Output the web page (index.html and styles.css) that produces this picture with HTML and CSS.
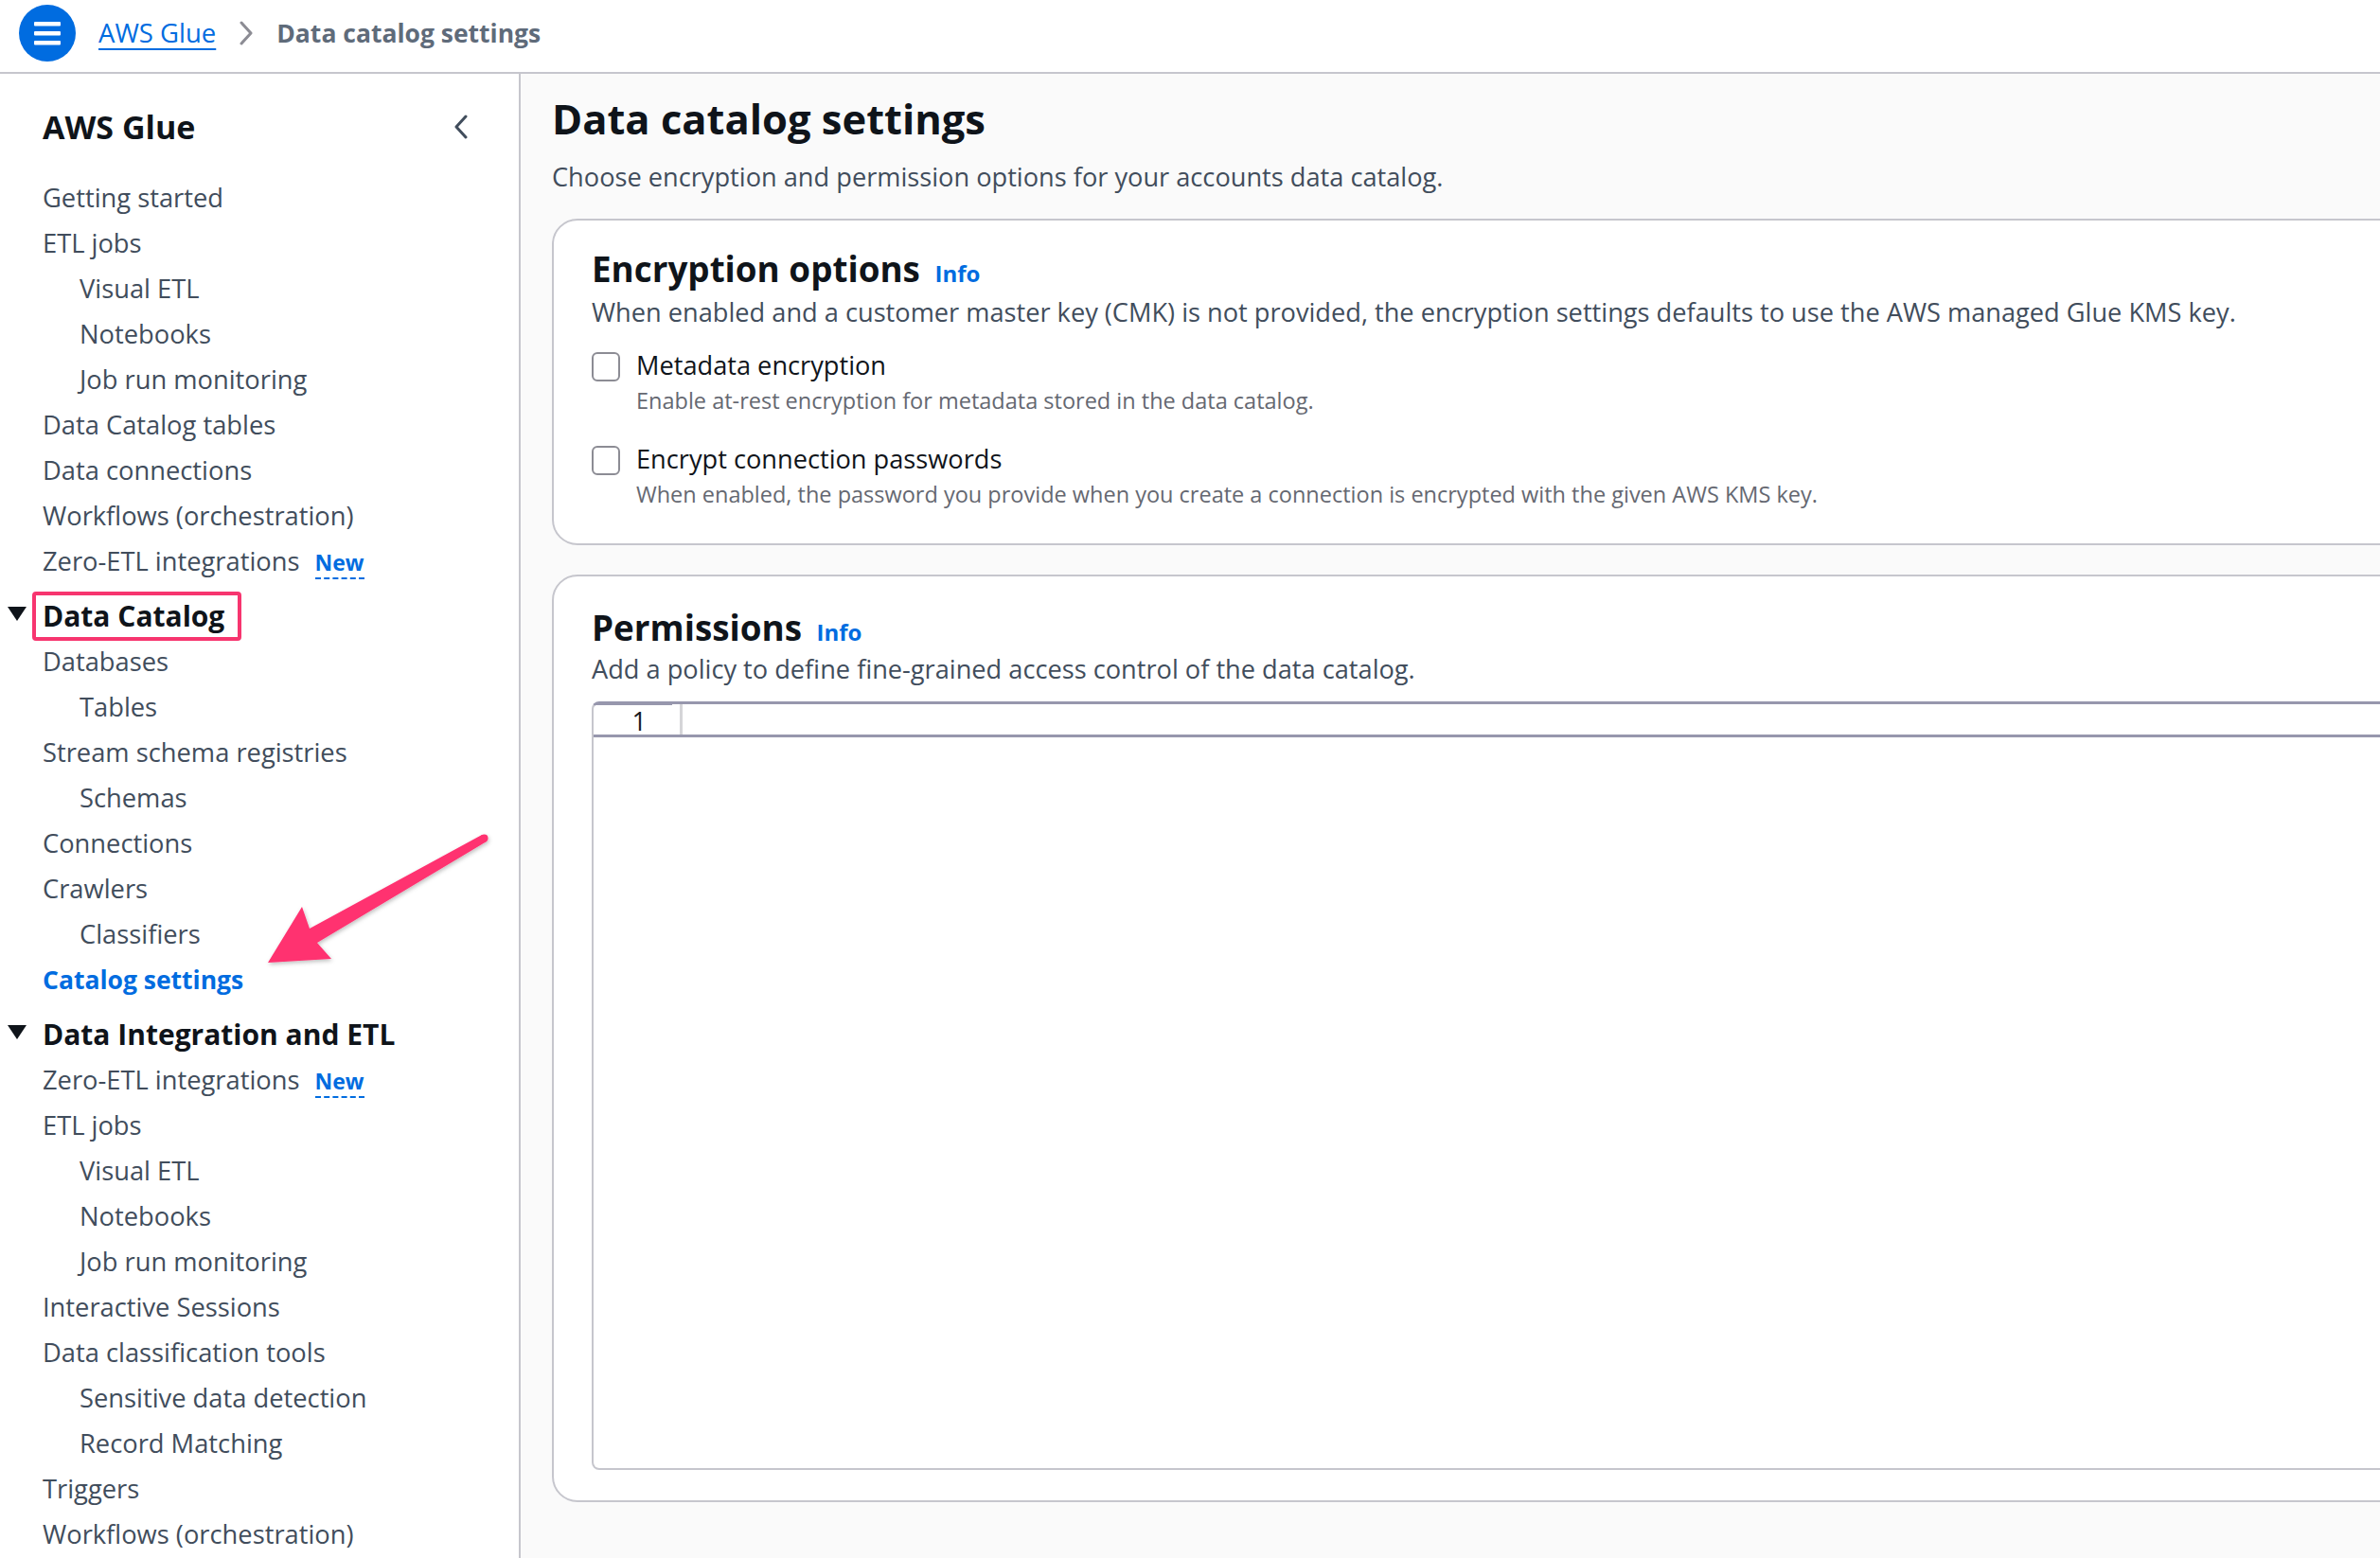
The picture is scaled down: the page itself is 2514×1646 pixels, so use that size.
FILE: index.html
```html
<!DOCTYPE html>
<html lang="en">
<head>
<meta charset="utf-8">
<title>Data catalog settings - AWS Glue</title>
<link rel="stylesheet" href="styles.css">
</head>
<body>
<header class="topbar">
  <button class="menu-btn" aria-label="Open navigation">
    <svg width="60" height="60" viewBox="0 0 60 60"><circle cx="30" cy="30" r="30" fill="#006ce0"/><rect x="16" y="18" width="28" height="4.5" rx="1" fill="#fff"/><rect x="16" y="28" width="28" height="4.5" rx="1" fill="#fff"/><rect x="16" y="38" width="28" height="4.5" rx="1" fill="#fff"/></svg>
  </button>
  <nav class="breadcrumbs">
    <a class="crumb-link" href="#">AWS Glue</a>
    <svg class="crumb-sep" width="16" height="26" viewBox="0 0 16 26"><polyline points="3,2 13,13 3,24" fill="none" stroke="#8c8c94" stroke-width="3" stroke-linejoin="round" stroke-linecap="round"/></svg>
    <span class="crumb-current">Data catalog settings</span>
  </nav>
</header>
<div class="layout">
  <aside class="sidenav">
    <div class="sidenav-header">
      <span class="sidenav-title">AWS Glue</span>
      <svg class="collapse" width="16" height="26" viewBox="0 0 16 26"><polyline points="13,2 3,13 13,24" fill="none" stroke="#414d5c" stroke-width="3" stroke-linejoin="round" stroke-linecap="round"/></svg>
    </div>
    <ul class="nav-list">
      <li class="nav-item">Getting started</li>
      <li class="nav-item">ETL jobs</li>
      <li class="nav-item sub">Visual ETL</li>
      <li class="nav-item sub">Notebooks</li>
      <li class="nav-item sub">Job run monitoring</li>
      <li class="nav-item">Data Catalog tables</li>
      <li class="nav-item">Data connections</li>
      <li class="nav-item">Workflows (orchestration)</li>
      <li class="nav-item">Zero-ETL integrations <span class="badge-new">New</span></li>
      <li class="nav-section"><svg class="caret" width="20" height="16" viewBox="0 0 20 16"><polygon points="0,0 20,0 10,15" fill="#0f141a"/></svg><span class="highlight">Data Catalog</span></li>
      <li class="nav-item">Databases</li>
      <li class="nav-item sub">Tables</li>
      <li class="nav-item">Stream schema registries</li>
      <li class="nav-item sub">Schemas</li>
      <li class="nav-item">Connections</li>
      <li class="nav-item">Crawlers</li>
      <li class="nav-item sub">Classifiers</li>
      <li class="nav-item active">Catalog settings</li>
      <li class="nav-section"><svg class="caret" width="20" height="16" viewBox="0 0 20 16"><polygon points="0,0 20,0 10,15" fill="#0f141a"/></svg><span>Data Integration and ETL</span></li>
      <li class="nav-item">Zero-ETL integrations <span class="badge-new">New</span></li>
      <li class="nav-item">ETL jobs</li>
      <li class="nav-item sub">Visual ETL</li>
      <li class="nav-item sub">Notebooks</li>
      <li class="nav-item sub">Job run monitoring</li>
      <li class="nav-item">Interactive Sessions</li>
      <li class="nav-item">Data classification tools</li>
      <li class="nav-item sub">Sensitive data detection</li>
      <li class="nav-item sub">Record Matching</li>
      <li class="nav-item">Triggers</li>
      <li class="nav-item">Workflows (orchestration)</li>
    </ul>
  </aside>
  <main class="content">
    <h1 class="page-title">Data catalog settings</h1>
    <p class="page-desc">Choose encryption and permission options for your accounts data catalog.</p>

    <section class="panel">
      <h2 class="panel-title">Encryption options <a class="info" href="#">Info</a></h2>
      <p class="panel-desc">When enabled and a customer master key (CMK) is not provided, the encryption settings defaults to use the AWS managed Glue KMS key.</p>
      <div class="check-row first">
        <span class="checkbox"></span>
        <div class="check-text">
          <div class="check-label">Metadata encryption</div>
          <div class="check-desc">Enable at-rest encryption for metadata stored in the data catalog.</div>
        </div>
      </div>
      <div class="check-row">
        <span class="checkbox"></span>
        <div class="check-text">
          <div class="check-label">Encrypt connection passwords</div>
          <div class="check-desc">When enabled, the password you provide when you create a connection is encrypted with the given AWS KMS key.</div>
        </div>
      </div>
    </section>

    <section class="panel panel-permissions">
      <h2 class="panel-title">Permissions <a class="info" href="#">Info</a></h2>
      <p class="panel-desc">Add a policy to define fine-grained access control of the data catalog.</p>
      <div class="editor">
        <div class="editor-row">
          <div class="gutter">1</div>
          <div class="gutter-gap"></div>
          <div class="gutter-divider"></div>
          <div class="line-body"></div>
        </div>
      </div>
    </section>
  </main>
</div>
<svg class="callout-arrow" width="600" height="1100" viewBox="0 0 600 1100">
  <defs>
    <filter id="sh" x="-10%" y="-10%" width="120%" height="120%"><feDropShadow dx="1" dy="2" stdDeviation="2" flood-color="#000" flood-opacity="0.25"/></filter>
  </defs>
  <g filter="url(#sh)" fill="#ff3170">
    <polygon points="283,1017 319,958 327,981 509,882 514,889 335,996 350,1013"/>
    <circle cx="511.5" cy="885.5" r="4"/>
  </g>
</svg>
</body>
</html>
```

FILE: styles.css
```css
* { box-sizing: border-box; }
html, body { margin: 0; padding: 0; }
body {
  width: 2514px;
  height: 1646px;
  overflow: hidden;
  position: relative;
  font-family: "Open Sans", "Noto Sans", "DejaVu Sans", sans-serif;
  font-size: 27.2px;
  color: #414d5c;
  background: #ffffff;
}

/* Top bar */
.topbar {
  height: 78px;
  border-bottom: 2px solid #c6c6cd;
  display: flex;
  align-items: flex-start;
  padding: 5px 0 0 20px;
  background: #fff;
}
.menu-btn {
  width: 60px; height: 60px; padding: 0; border: 0; background: none;
  display: block;
}
.menu-btn svg { display: block; }
.breadcrumbs {
  display: flex;
  align-items: center;
  margin-left: 24px;
  height: 60px;
  gap: 24px;
}
.crumb-link {
  color: #006ce0;
  text-decoration: underline;
  text-decoration-thickness: 2px;
  text-underline-offset: 6px;
  line-height: 40px;
  font-size: 27.5px;
}
.crumb-sep { display: block; }
.crumb-current { font-weight: 700; color: #5f6b7a; font-size: 26.5px; line-height: 40px; }

/* Layout */
.layout {
  display: flex;
  height: calc(1646px - 78px);
}

/* Side nav */
.sidenav {
  width: 550px;
  flex: 0 0 550px;
  border-right: 2px solid #c6c6cd;
  background: #fff;
  padding: 34px 53px 0 45px;
}
.sidenav-header {
  display: flex;
  align-items: center;
  height: 44px;
  margin-bottom: 29px;
}
.sidenav-title {
  font-weight: 700;
  font-size: 34px;
  line-height: 44px;
  color: #0f141a;
}
.collapse { margin-left: auto; display: block; }
.nav-list { list-style: none; margin: 0; padding: 0; font-size: 27.3px; }
.nav-item {
  line-height: 48px;
  height: 48px;
  white-space: nowrap;
  color: #414d5c;
}
.nav-item.sub { padding-left: 39px; }
.nav-item.active { color: #006ce0; font-weight: 700; font-size: 26.5px; }
.badge-new {
  color: #006ce0;
  font-weight: 700;
  font-size: 23px;
  margin-left: 9px;
  border-bottom: 2px dashed #006ce0;
}
.nav-section {
  margin-top: 10px;
  height: 48px;
  line-height: 48px;
  font-weight: 700;
  font-size: 30px;
  color: #0f141a;
  white-space: nowrap;
  display: flex;
  align-items: center;
}
.caret { margin-left: -37px; margin-right: 17px; flex: 0 0 auto; display: block; position: relative; top: -2px; }
.highlight {
  display: inline-block;
  padding: 0 16px 0 9px;
  margin-left: -9px;
  line-height: 48px;
  outline: 4px solid #f7356f;
  outline-offset: -2px;
  border-radius: 2px;
}

/* Main content */
.content {
  flex: 1 1 auto;
  min-width: 0;
  overflow: hidden;
  background: #fafafa;
  padding: 22px 0 0 33px;
}
.page-title {
  margin: 0;
  font-size: 43.5px;
  line-height: 52px;
  font-weight: 700;
  color: #0f141a;
}
.page-desc {
  margin: 15px 0 0;
  line-height: 40px;
  color: #414d5c;
}
.panel {
  margin: 24px -140px 0 0;
  background: #fff;
  border: 2px solid #c6c6cd;
  border-radius: 27px;
  padding: 30px 40px 35px;
}
.panel-permissions { margin-top: 31px; padding-top: 33px; padding-bottom: 32px; }
.panel-permissions .panel-desc { margin-top: -2px; }
.panel-title {
  margin: 0;
  font-size: 36.8px;
  line-height: 42px;
  font-weight: 700;
  color: #0f141a;
}
.info {
  font-size: 24px;
  font-weight: 700;
  color: #006ce0;
  text-decoration: none;
  margin-left: 6px;
}
.panel-desc {
  margin: 0;
  line-height: 40px;
  color: #414d5c;
}
.check-row {
  display: flex;
  align-items: flex-start;
  gap: 17px;
  margin-top: 25px;
}
.check-row.first { margin-top: 16px; }
.checkbox {
  width: 30px;
  height: 31px;
  flex: 0 0 30px;
  margin-top: 6px;
  border: 2px solid #8c8c94;
  border-radius: 6px;
  background: #fff;
}
.check-label { line-height: 40px; color: #0f141a; }
.check-desc { font-size: 23.5px; line-height: 34px; color: #656871; }

/* Code editor */
.editor {
  margin-top: 14px;
  height: 812px;
  border: 2px solid #c6c6cd;
  border-top: 3px solid #9797ad;
  border-radius: 8px;
  background: #fff;
}
.editor-row {
  display: flex;
  height: 35px;
  border-bottom: 3px solid #9797ad;
}
.gutter {
  width: 83px;
  flex: 0 0 83px;
  text-align: right;
  padding: 2px 27px 0 0;
  line-height: 32px;
  color: #16191f;
  box-shadow: inset 0 1px 0 #9797ad;
}
.gutter-gap { width: 8px; flex: 0 0 8px; }
.gutter-divider { width: 3px; flex: 0 0 3px; background: #d5d5d8; }
.line-body { flex: 1 1 auto; }

/* Annotation arrow */
.callout-arrow {
  position: absolute;
  left: 0;
  top: 0;
  pointer-events: none;
}
```
